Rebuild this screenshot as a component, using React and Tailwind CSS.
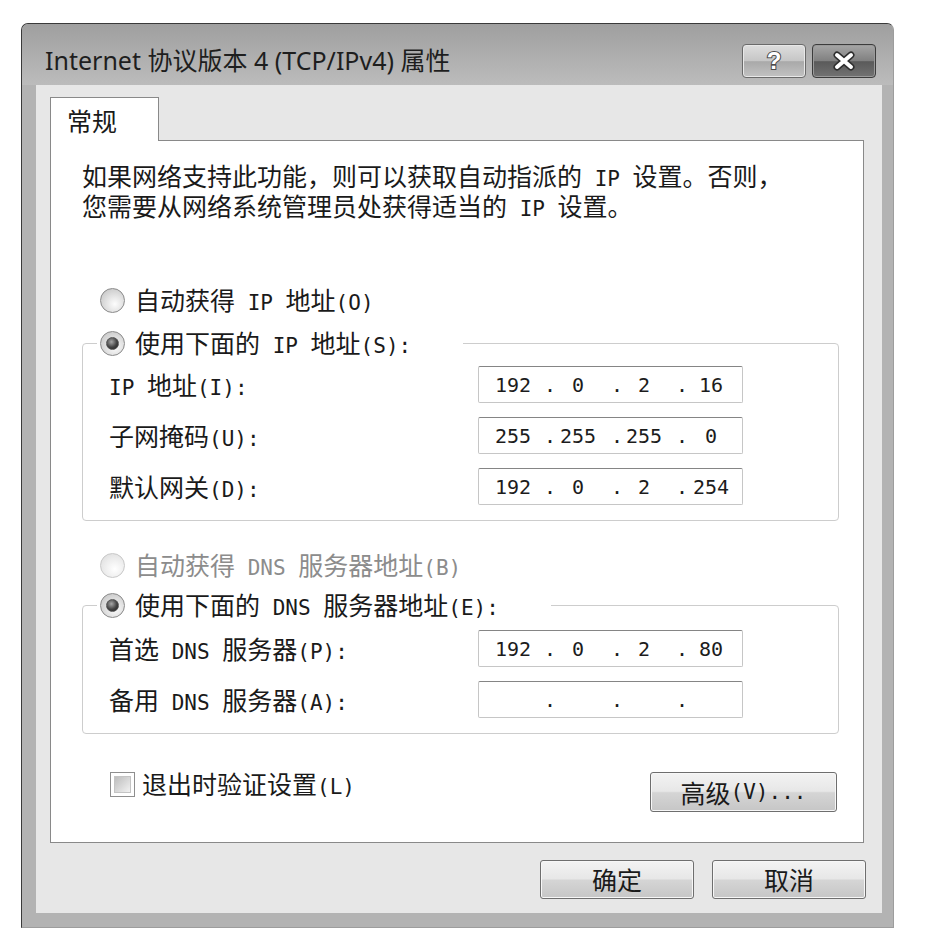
// TCP/IPv4 properties dialog (Windows 7 style, grayscale)

const CJK = "font-['Noto_Sans_CJK_SC',sans-serif]"

// half-width Latin run, mimics SimSun's monospaced ASCII
function M({ children }) {
  return <span className="font-['DejaVu_Sans_Mono','Noto_Sans_CJK_SC',monospace] text-[21px] leading-none">{children}</span>
}

function Radio({ checked, disabled }) {
  return (
    <span
      className={
        disabled
          ? 'flex h-[25px] w-[25px] shrink-0 items-center justify-center rounded-full border border-[#c8c8c8] bg-[radial-gradient(circle_at_60%_65%,#ffffff,#ebebeb_55%,#d9d9d9)]'
          : 'flex h-[25px] w-[25px] shrink-0 items-center justify-center rounded-full border border-[#8a8a8a] bg-[radial-gradient(circle_at_60%_65%,#fdfdfd,#dadada_55%,#bdbdbd)]'
      }
    >
      {checked && (
        <span className="h-[13px] w-[13px] rounded-full border border-[#555] bg-[radial-gradient(circle_at_40%_35%,#a8a8a8,#444_55%,#1e1e1e)]" />
      )}
    </span>
  )
}

function IpBox({ parts }) {
  return (
    <div className="grid h-[37px] w-[265px] grid-cols-[11px_46px_20px_44px_23px_42px_23px_46px] items-center rounded-[2px] border border-[#c6c6c6] border-t-[#858585] bg-white font-['DejaVu_Sans_Mono',monospace] text-[20px] text-[#1c1c1c]">
      <span />
      <span className="text-center">{parts[0]}</span>
      <span className="text-right">.</span>
      <span className="text-center">{parts[1]}</span>
      <span className="text-right">.</span>
      <span className="text-center">{parts[2]}</span>
      <span className="text-right">.</span>
      <span className="text-center">{parts[3]}</span>
    </div>
  )
}

function Button({ children, className = '' }) {
  return (
    <button
      className={`flex items-center justify-center rounded-[3px] border border-[#6e6e6e] bg-[linear-gradient(#f3f3f3,#e7e7e7_48%,#d5d5d5_52%,#c6c6c6)] shadow-[inset_0_0_0_1px_#f7f7f7] text-[25px] text-[#1a1a1a] ${className}`}
    >
      {children}
    </button>
  )
}

export default function App() {
  return (
    <div className={`h-[948px] w-[942px] overflow-hidden bg-white pl-[21px] pt-[23px] ${CJK} text-[#1a1a1a]`}>
      <div className="flex h-[905px] w-[873px] flex-col rounded-t-[7px] border border-[#3a3a3a] border-b-[#9d9d9d] border-r-[#9d9d9d] bg-[#b3b3b3]">

        {/* Title bar */}
        <div className="flex h-[61px] shrink-0 items-center justify-between rounded-t-[6px] bg-linear-to-b from-[#9f9f9f] to-[#bcbcbc] pl-[23px] pr-[17px] pt-[12px]">
          <span className="font-['Noto_Sans','Noto_Sans_CJK_SC',sans-serif] text-[25px] text-[#1e1e1e]">
            Internet 协议版本 4 (TCP/IPv4) 属性
          </span>
          <div className="flex gap-[6px]">
            <div className="flex h-[34px] w-[64px] items-center justify-center rounded-[4px] border border-[#6a6a6a] bg-[linear-gradient(#dedede,#c6c6c6_50%,#a9a9a9_52%,#c2c2c2)] shadow-[inset_0_0_0_1px_#e8e8e8]">
              <span className="font-['Liberation_Sans',sans-serif] text-[24px] font-bold leading-none text-white [-webkit-text-stroke:2px_#4a4a4a] [paint-order:stroke_fill]">?</span>
            </div>
            <div className="flex h-[34px] w-[64px] items-center justify-center rounded-[4px] border border-[#3c3c3c] bg-[linear-gradient(#a6a6a6,#808080_50%,#5a5a5a_52%,#727272)] shadow-[inset_0_0_0_1px_#9a9a9a]">
              <svg width="24" height="20" viewBox="0 0 24 20">
                <path d="M5 4 L19 16 M19 4 L5 16" stroke="#2e2e2e" strokeWidth="7" strokeLinecap="round" />
                <path d="M5 4 L19 16 M19 4 L5 16" stroke="#ffffff" strokeWidth="4" strokeLinecap="round" />
              </svg>
            </div>
          </div>
        </div>

        {/* Client area */}
        <div className="mb-[14px] ml-[14px] mr-[11px] flex flex-1 flex-col bg-[#e7e7e7] pl-[14px] pr-[16px] pt-[12px]">
          <div className="relative z-10 -mb-px flex h-[44px] w-[109px] items-center border border-b-0 border-[#898989] bg-white pl-[16px] pt-[2px] text-[25px]">
            常规
          </div>

          <div className="mr-[2px] h-[703px] border border-[#898989] bg-white pl-[31px] pr-[24px] text-[25px] leading-[26px]">
            <p className="mt-[19px] whitespace-nowrap leading-[30px]">
              如果网络支持此功能，则可以获取自动指派的<M> IP </M>设置。否则，
              <br />
              您需要从网络系统管理员处获得适当的<M> IP </M>设置。
            </p>

            <div className="mt-[67px] flex h-[26px] items-center gap-[10px] pl-[18px]">
              <Radio />
              <span>自动获得<M> IP </M>地址<M>(O)</M></span>
            </div>

            <fieldset className="mt-[17px] rounded-[4px] border border-[#cdcdcd] pb-[15px] pl-[26px] pt-[10px]">
              <legend className="-ml-[12px] pl-[3px] pr-[52px]">
                <div className="flex h-[26px] items-center gap-[10px]">
                  <Radio checked />
                  <span>使用下面的<M> IP </M>地址<M>(S):</M></span>
                </div>
              </legend>
              <div className="grid grid-cols-[369px_265px] items-center gap-y-[14px]">
                <span><M>IP </M>地址<M>(I):</M></span>
                <IpBox parts={['192', '0', '2', '16']} />
                <span>子网掩码<M>(U):</M></span>
                <IpBox parts={['255', '255', '255', '0']} />
                <span>默认网关<M>(D):</M></span>
                <IpBox parts={['192', '0', '2', '254']} />
              </div>
            </fieldset>

            <div className="mt-[31px] flex h-[26px] items-center gap-[10px] pl-[18px] text-[#8c8c8c]">
              <Radio disabled />
              <span>自动获得<M> DNS </M>服务器地址<M>(B)</M></span>
            </div>

            <fieldset className="mt-[14px] rounded-[4px] border border-[#cdcdcd] pb-[15px] pl-[26px] pt-[12px]">
              <legend className="-ml-[12px] pl-[3px] pr-[52px]">
                <div className="flex h-[26px] items-center gap-[10px]">
                  <Radio checked />
                  <span>使用下面的<M> DNS </M>服务器地址<M>(E):</M></span>
                </div>
              </legend>
              <div className="grid grid-cols-[369px_265px] items-center gap-y-[14px]">
                <span>首选<M> DNS </M>服务器<M>(P):</M></span>
                <IpBox parts={['192', '0', '2', '80']} />
                <span>备用<M> DNS </M>服务器<M>(A):</M></span>
                <IpBox parts={['', '', '', '']} />
              </div>
            </fieldset>

            <div className="mt-[37px] flex items-start justify-between">
              <div className="flex h-[26px] items-center gap-[7px] pl-[28px]">
                <span className="flex h-[25px] w-[25px] items-center justify-center border border-[#8e8e8e] bg-white">
                  <span className="h-[17px] w-[17px] border border-[#c4c4c4] bg-linear-to-br from-[#bdbdbd] to-[#f2f2f2]" />
                </span>
                <span>退出时验证设置<M>(L)</M></span>
              </div>
              <Button className="mr-[2px] mt-[1px] h-[40px] w-[187px]">
                高级<M>(V)...</M>
              </Button>
            </div>
          </div>

          <div className="mt-[17px] flex justify-end gap-[18px]">
            <Button className="h-[39px] w-[154px]">确定</Button>
            <Button className="h-[39px] w-[154px]">取消</Button>
          </div>
        </div>
      </div>
    </div>
  )
}
